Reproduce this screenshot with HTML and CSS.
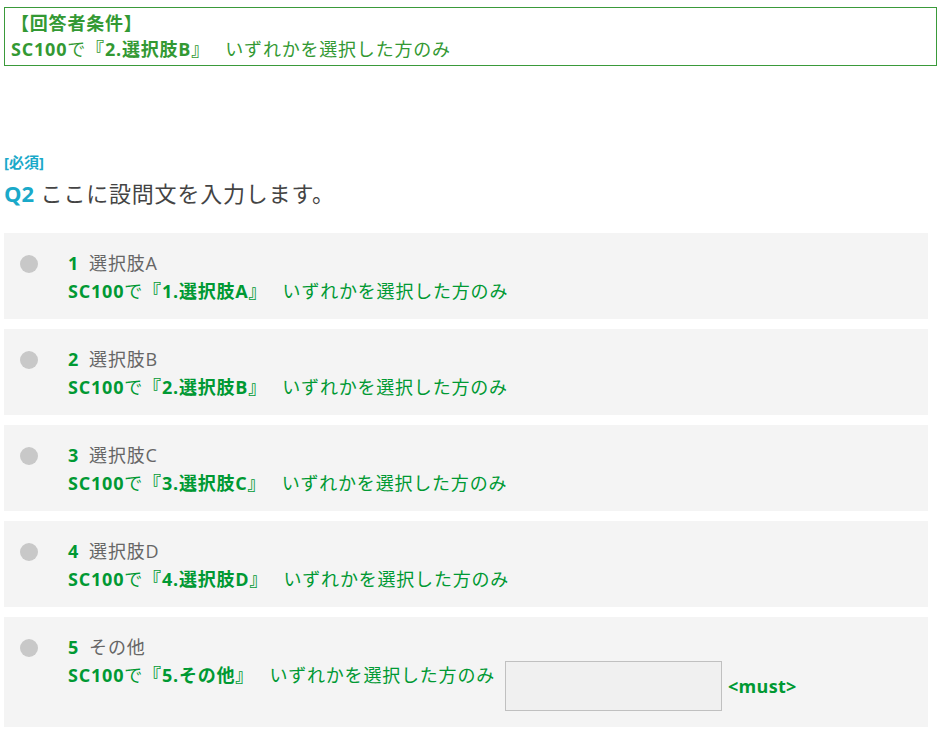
FILE: index.html
```html
<!DOCTYPE html>
<html lang="ja">
<head>
  <meta charset="UTF-8">
  <title>設問プレビュー</title>
  <link rel="stylesheet" href="styles.css">
</head>
<body>
  <div class="condition">
    <div class="condition-title">【回答者条件】</div>
    <div><b>SC100</b>で<b>『2.選択肢B』</b>　 いずれかを選択した方のみ</div>
  </div>

  <div class="question">
    <div class="required">[必須]</div>
    <div class="question-title"><span class="qno">Q2</span> ここに設問文を入力します。</div>
  </div>

  <div class="choices">
    <label class="choice">
      <span class="radio"></span>
      <div class="choice-body">
        <div><span class="num">1</span>選択肢A</div>
        <div class="cond-line"><b>SC100</b>で<b>『1.選択肢A』</b>　 いずれかを選択した方のみ</div>
      </div>
    </label>

    <label class="choice">
      <span class="radio"></span>
      <div class="choice-body">
        <div><span class="num">2</span>選択肢B</div>
        <div class="cond-line"><b>SC100</b>で<b>『2.選択肢B』</b>　 いずれかを選択した方のみ</div>
      </div>
    </label>

    <label class="choice">
      <span class="radio"></span>
      <div class="choice-body">
        <div><span class="num">3</span>選択肢C</div>
        <div class="cond-line"><b>SC100</b>で<b>『3.選択肢C』</b>　 いずれかを選択した方のみ</div>
      </div>
    </label>

    <label class="choice">
      <span class="radio"></span>
      <div class="choice-body">
        <div><span class="num">4</span>選択肢D</div>
        <div class="cond-line"><b>SC100</b>で<b>『4.選択肢D』</b>　 いずれかを選択した方のみ</div>
      </div>
    </label>

    <label class="choice">
      <span class="radio"></span>
      <div class="choice-body">
        <div><span class="num">5</span>その他</div>
        <div class="cond-line other-line">
          <span><b>SC100</b>で<b>『5.その他』</b>　 いずれかを選択した方のみ</span>
          <input type="text" class="other-input">
          <span class="must">&lt;must&gt;</span>
        </div>
      </div>
    </label>
  </div>
</body>
</html>
```

FILE: styles.css
```css
body {
  margin: 0;
  padding: 7px 4px;
  font-family: "Open Sans", "Noto Sans CJK JP", sans-serif;
  font-size: 18px;
  letter-spacing: 0.8px;
  color: #666;
  background: #fff;
}

.condition {
  width: 933px;
  box-sizing: border-box;
  border: 1px solid #3a9a3a;
  padding: 2px 6px 3px;
  color: #339933;
  line-height: 26px;
}

.condition-title {
  font-weight: bold;
}

.question {
  margin-top: 87px;
}

.required {
  color: #1aa9c9;
  font-size: 15px;
  font-weight: bold;
  line-height: 18px;
  letter-spacing: 0;
}

.question-title {
  margin-top: 6px;
  font-size: 22px;
  color: #444;
  line-height: 32px;
}

.qno {
  color: #1aa9c9;
  font-weight: bold;
  letter-spacing: 0;
}

.choices {
  margin-top: 24px;
  width: 924px;
  display: flex;
  flex-direction: column;
  gap: 10px;
}

.choice {
  display: flex;
  align-items: flex-start;
  background: #f4f4f4;
  padding: 16px 16px 14px;
  line-height: 28px;
}

.choice:last-child {
  padding-bottom: 16px;
}

.radio {
  width: 18px;
  height: 18px;
  border-radius: 50%;
  background: #c8c8c8;
  margin-top: 6px;
  margin-right: 30px;
  flex-shrink: 0;
}

.num {
  font-weight: bold;
  color: #009933;
  margin-right: 10px;
}

.cond-line {
  color: #009933;
}

.other-line {
  display: flex;
  align-items: flex-start;
}

.other-input {
  width: 217px;
  height: 50px;
  box-sizing: border-box;
  margin: 0 0 0 10px;
  border: 1px solid #c0c0c0;
  background: #f0f0f0;
  font: inherit;
}

.must {
  align-self: center;
  font-weight: bold;
  margin-left: 6px;
  letter-spacing: 0.3px;
}
```
